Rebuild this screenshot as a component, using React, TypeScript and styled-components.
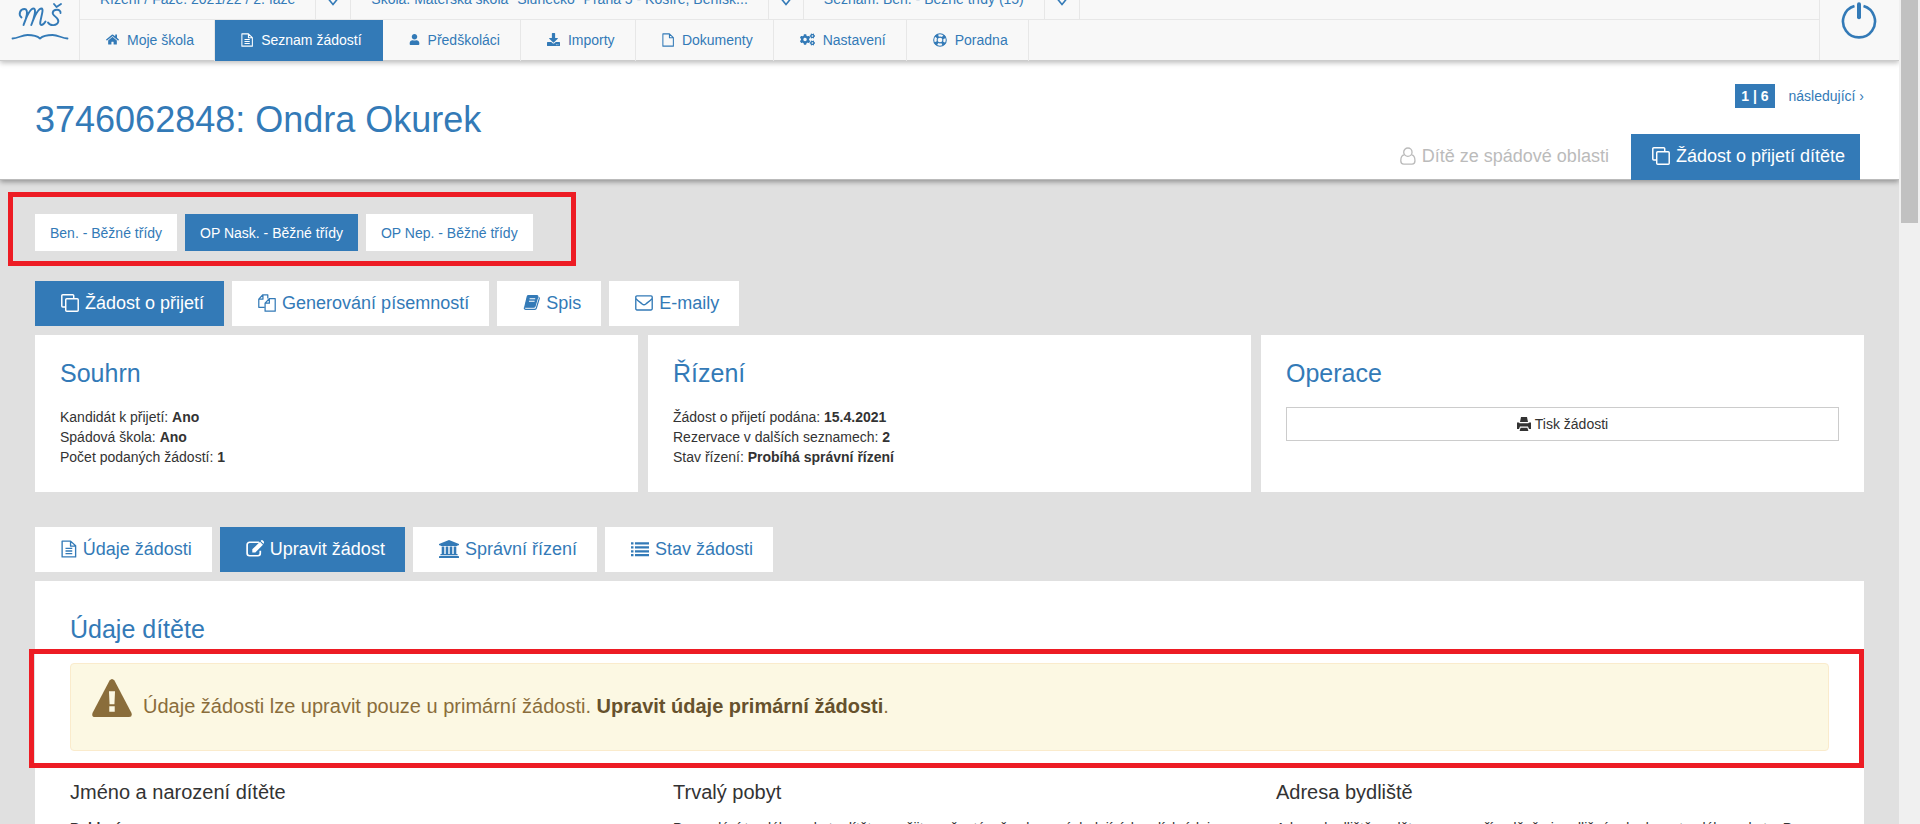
import React from "react";
import styled, { createGlobalStyle, css } from "styled-components";
import { FaHome, FaUser, FaDownload, FaCogs } from "react-icons/fa";

const blue = "#337ab7";

const GlobalStyle = createGlobalStyle`
  *, *::before, *::after { box-sizing: border-box; }
  html, body { margin: 0; height: 100%; overflow: hidden; }
  #root { height: 100%; }
  body {
    font-family: "Liberation Sans", Arial, sans-serif;
    font-size: 14px;
    line-height: 20px;
    color: #333;
    background: #e0e0e0;
  }
  a { color: ${blue}; text-decoration: none; }
  button { font: inherit; cursor: pointer; }
  h1, h2, h3, p, ul { margin: 0; padding: 0; font-weight: 400; }
  svg { display: block; flex: none; }
`;

const Window = styled.div`
  display: flex;
  height: 100vh;
  overflow: hidden;
`;

const Page = styled.div`
  flex: 1;
  min-width: 0;
  height: 100%;
  overflow: hidden;
`;

const ScrollTrack = styled.div`
  flex: none;
  width: 21px;
  padding: 0 2px;
  background: #f0f0f0;
`;

const ScrollThumb = styled.div`
  height: 223px;
  background: #c1c1c1;
`;

const TopBar = styled.header`
  position: relative;
  z-index: 2;
  display: flex;
  height: 61px;
  background: #f8f8f8;
  border-bottom: 1px solid #ccc;
  box-shadow: 0 2px 5px rgba(0, 0, 0, 0.25);
`;

const LogoLink = styled.a`
  display: flex;
  justify-content: center;
  width: 80px;
  border-right: 1px solid #e7e7e7;
`;

const Menus = styled.div`
  flex: 1;
  min-width: 0;
`;

const ContextRow = styled.div`
  display: flex;
  align-items: flex-end;
  height: 20px;
  border-bottom: 1px solid #e7e7e7;
`;

const ContextLink = styled.a`
  height: 40px;
  padding: 10px 20px;
  border-right: 1px solid #e7e7e7;
`;

const ContextToggle = styled.button`
  display: flex;
  align-items: flex-end;
  justify-content: center;
  width: 35px;
  height: 40px;
  padding: 0 0 13px;
  color: ${blue};
  background: none;
  border: 0;
  border-right: 1px solid #e7e7e7;
`;

const Nav = styled.nav`
  display: flex;
  height: 41px;
`;

const NavLink = styled.a<{ $active?: boolean }>`
  display: flex;
  align-items: center;
  gap: 8px;
  padding: 0 20px 2px 26px;
  border-right: 1px solid #e7e7e7;
  ${(p) => p.$active && css`
    color: #fff;
    background: ${blue};
    border-color: ${blue};
  `}
`;

const Logout = styled.button`
  width: 80px;
  display: flex;
  justify-content: center;
  padding: 2px 2px 0 0;
  color: ${blue};
  background: none;
  border: 0;
  border-left: 1px solid #e7e7e7;
`;

const TitleBar = styled.section`
  position: relative;
  z-index: 1;
  display: flex;
  justify-content: space-between;
  height: 119px;
  padding: 0 35px;
  background: #fff;
  border-bottom: 1px solid #bbb;
  box-shadow: 0 2px 5px rgba(0, 0, 0, 0.35);
`;

const Title = styled.h1`
  padding-top: 39px;
  font-size: 36px;
  line-height: 40px;
  color: ${blue};
`;

const TitleSide = styled.div`
  display: flex;
  flex-direction: column;
  align-items: flex-end;
  justify-content: space-between;
  padding-top: 23px;
`;

const Pager = styled.div`
  display: flex;
  align-items: center;
  gap: 14px;
`;

const PagerBadge = styled.span`
  padding: 2px 6px;
  font-weight: 700;
  color: #fff;
  background: ${blue};
`;

const TitleTabs = styled.div`
  display: flex;
  align-items: stretch;
  height: 46px;
  margin: 0 4px -1px 0;
  font-size: 18px;
`;

const TitleTab = styled.a<{ $active?: boolean }>`
  display: flex;
  align-items: center;
  gap: 6px;
  padding: 0 22px 2px;
  color: #bbb;
  ${(p) => p.$active && css`
    padding: 0 15px 2px 21px;
    color: #fff;
    background: ${blue};
  `}
`;

const Content = styled.main`
  padding: 12px 35px 0;
`;

const Marked = styled.div`
  border: 5px solid #ed1c24;
`;

const ListMark = styled(Marked)`
  width: fit-content;
  margin-left: -27px;
  padding: 17px 38px 10px 22px;
`;

const TabRow = styled.nav`
  display: flex;
  gap: 8px;
`;

const SmallTab = styled.a<{ $active?: boolean }>`
  padding: 9px 15px 8px;
  background: ${(p) => (p.$active ? blue : "#fff")};
  color: ${(p) => (p.$active ? "#fff" : blue)};
`;

const BigTabs = styled(TabRow)`
  padding-top: 15px;
`;

const LowerTabs = styled(TabRow)`
  padding-top: 35px;
`;

const Tab = styled.a<{ $active?: boolean }>`
  display: flex;
  align-items: center;
  gap: 6px;
  height: 45px;
  padding: 0 20px 2px 26px;
  font-size: 18px;
  background: #fff;
  ${(p) => p.$active && css`
    color: #fff;
    background: ${blue};
  `}
`;

const Cards = styled.div`
  display: grid;
  grid-template-columns: repeat(3, 1fr);
  gap: 10px;
  padding-top: 9px;
`;

const Card = styled.section`
  min-height: 157px;
  padding: 23px 25px;
  background: #fff;
`;

const Heading = styled.h2`
  font-size: 25px;
  line-height: 30px;
  color: ${blue};
`;

const Facts = styled.ul`
  padding-top: 19px;
  list-style: none;
`;

const PrintButton = styled.button`
  display: flex;
  align-items: center;
  justify-content: center;
  gap: 4px;
  width: 100%;
  height: 34px;
  margin-top: 19px;
  color: #333;
  background: #fff;
  border: 1px solid #ccc;
`;

const Panel = styled.section`
  margin-top: 9px;
  padding: 33px 35px 60px;
  background: #fff;
`;

const AlertMark = styled(Marked)`
  margin: 5px -35px 0 -41px;
  padding: 9px 30px 12px 36px;
`;

const Alert = styled.div`
  display: flex;
  align-items: flex-start;
  gap: 11px;
  height: 88px;
  padding: 15px 21px;
  font-size: 20px;
  color: #8a6d3b;
  background: #fcf8e3;
  border: 1px solid #faebcc;
  border-radius: 4px;
`;

const AlertText = styled.p`
  padding-top: 13px;
  line-height: 28px;
  a { font-weight: 700; color: #66512c; }
`;

const Columns = styled.div`
  display: grid;
  grid-template-columns: repeat(3, minmax(0, 1fr));
  gap: 20px;
  margin-right: -30px;
  padding-top: 12px;
`;

const SubHeading = styled.h3`
  font-size: 20px;
  line-height: 24px;
`;

const ColumnText = styled.p<{ $strong?: boolean }>`
  padding-top: 14px;
  white-space: nowrap;
  font-weight: ${(p) => (p.$strong ? 700 : 400)};
`;

/* Outline icons on a 16-unit grid, drawn as strokes. */
type IconProps = { size?: number };

const Outline = ({ size = 18, w = 16, sw = 1.3, children }: IconProps & { w?: number; sw?: number; children: React.ReactNode }) => (
  <svg width={(size * w) / 16} height={size} viewBox={`0 0 ${w} 16`} fill="none" stroke="currentColor" strokeWidth={sw} strokeLinejoin="round" aria-hidden="true">
    {children}
  </svg>
);

const FileIcon = ({ size, lines }: IconProps & { lines?: boolean }) => (
  <Outline size={size} w={14} sw={1.2}>
    <path d="M1 1h7.5L13 5.2V15H1zM8.5 1v4.5H13" />
    {lines && <path d="M4 7.5h6M4 9.8h6M4 12.1h6" />}
  </Outline>
);

const CopyIcon = () => (
  <Outline>
    <path d="M4 11.5H1.6a.9.9 0 0 1-.9-.9V1.6a.9.9 0 0 1 .9-.9h8.8a.9.9 0 0 1 .9.9V4" />
    <rect x="4.2" y="4.2" width="11.1" height="11.1" rx=".9" />
  </Outline>
);

const PagesIcon = () => (
  <Outline sw={1.1}>
    <path d="M6 11.8H.7V4.5L4.3.7h4.4v3.4M.7 4.6h3.7V.7" />
    <path d="M6.3 8.1 10 4.2h5.3v11.1h-9zM6.3 8.2h3.8v-4" />
  </Outline>
);

const BookIcon = () => (
  <Outline size={17} sw={1.1}>
    <path fill="currentColor" d="M5 1.6h8.2q1 0 .7 1L11.3 11.5q-.3 1-1.3 1H1.6L4 2.6q.3-1 1-1z" />
    <path d="M1.6 12.500c-.8 1 0 1.900 1 1.900h8.600q1 0 1.300-1L15.300 4.300q.2-.9-.6-1.300" />
    <path stroke="#fff" strokeWidth="1" d="M6.2 4.5h5.3M5.6 6.8h5.3" />
  </Outline>
);

const MailIcon = () => (
  <Outline sw={1.2}>
    <rect x=".7" y="1.6" width="14.6" height="12.6" rx="1" />
    <path d="M.9 4.2c2 2.1 4.2 3.5 5.5 4.7q1.6 1.3 3.2 0c1.3-1.2 3.5-2.6 5.5-4.7" />
  </Outline>
);

const PersonOutlineIcon = () => (
  <Outline w={14} sw={1.2}>
    <circle cx="7" cy="4.6" r="3.7" />
    <path d="M3.7 7C1.5 7.3.7 9.5.7 12.3c0 1.7 1 2.9 2.6 2.9h7.4c1.6 0 2.6-1.2 2.6-2.9 0-2.8-.8-5-3-5.3" />
  </Outline>
);

const RingIcon = () => (
  <Outline size={14} sw={1.2}>
    <circle cx="8" cy="8" r="7.2" />
    <circle cx="8" cy="8" r="3.3" />
    <circle cx="8" cy="8" r="5.3" strokeWidth="4" strokeDasharray="3.33 5" strokeDashoffset="-2.5" />
  </Outline>
);

const EditIcon = () => (
  <Outline sw={1.5}>
    <path d="M11.5 2H3.2A2.2 2.2 0 0 0 1 4.2v7.6A2.2 2.2 0 0 0 3.2 14h7.3a2.2 2.2 0 0 0 2.2-2.2V9.5" />
    <path fill="currentColor" stroke="none" d="m5.6 8.3 6.8-6.8 2.7 2.7L8.3 11H5.6zM13 .9l.6-.6q.6-.5 1.2 0l1.2 1.3q.5.6 0 1.1l-.5.7z" />
  </Outline>
);

const BankIcon = () => (
  <svg width="20" height="18" viewBox="0 0 20 18" fill="currentColor" aria-hidden="true">
    <path d="M10 0 20 4v1.3h-1.3q0 .7-.8.7H2.1q-.8 0-.8-.7H0V4z" />
    <path d="M2.7 6.6h2.6v7.3h1.4V6.6h2.6v7.3h1.4V6.6h2.6v7.3h1.4V6.6h2.6v7.3h.6q.8 0 .8.7v.7H1.3v-.7q0-.7.8-.7h.6zM.8 15.9h18.4q.8 0 .8.7V18H0v-1.4q0-.7.8-.7z" />
  </svg>
);

const ListIcon = () => (
  <Outline sw={2}>
    <path d="M0 3h2.2M3.5 3H16M0 6.5h2.2M3.5 6.5H16M0 10h2.2M3.5 10H16M0 13.5h2.2M3.5 13.5H16" />
  </Outline>
);

const PrintIcon = () => (
  <svg width="14" height="14" viewBox="0 0 14 14" fill="currentColor" aria-hidden="true">
    <path d="M4 0h6l1 5H3zM0 5.5h2l.6.7h8.8l.6-.7h2V12h-2l-1-2.5H3L2 12H0zM3.6 10.7h6.8L11.4 14H2.6z" />
  </svg>
);

const WarningIcon = () => (
  <svg width="40" height="39" viewBox="0 0 41 40" aria-hidden="true">
    <path fill="currentColor" d="M18 1.6q2.5-3.2 5 0l17.5 33.3q1.2 3.9-2.5 4.1H3q-3.7-.2-2.5-4.1z" />
    <path fill="#fcf8e3" d="M17.4 12.5h6.2l-.6 13.3h-5zM17.7 28h5.6v5.6h-5.6z" />
  </svg>
);

const ChevronIcon = () => (
  <svg width="12" height="8" viewBox="0 0 12 8" fill="none" stroke="currentColor" strokeWidth="1.6" aria-hidden="true">
    <path d="m1.5 1 4.5 5.5L10.5 1" />
  </svg>
);

const PowerIcon = () => (
  <svg width="36" height="38" viewBox="0 0 36 38" fill="none" stroke="currentColor" aria-hidden="true">
    <path strokeWidth="2.6" d="M13.5 4A16 16 0 1 0 22.500 4" />
    <path strokeWidth="4" strokeLinecap="round" d="M18 2.2v13" />
  </svg>
);

const Logo = () => (
  <svg width="58" height="42" viewBox="0 0 58 42" fill="none" stroke={blue} strokeLinecap="round" strokeLinejoin="round" role="img" aria-label="MŠ">
    <g strokeWidth="1.9">
      <path d="M10.5 17.5C7 14.5 9 9 13.5 9c4.5 0 2 9.5-1 16C15 18 19 8.500 22.500 8.500c3.200 0 .8 9-2.200 16.500C23 17.500 27 8.500 30.500 8.500c3.700 0-4 16.500-.2 16.500 1.700 0 3-1.500 4.200-3.500" />
      <path d="M49.5 13c.8-4-7-4.500-7.800-.3-.6 3.300 6.500 4.800 5.600 8.800-1 4.500-8.300 4.700-10.300 1" />
      <path d="m43 4 2.500 3L50 4" />
    </g>
    <path strokeWidth="1.8" d="M1.5 38.5c6-.3 9-3.500 15-3.500 6 0 10 1.200 12.500 3.500 2.500-2.300 6.500-3.500 12.500-3.500 6 0 9 3.200 15 3.500" />
  </svg>
);

const navItems = [
  { label: "Moje škola", icon: <FaHome size={13} /> },
  { label: "Seznam žádostí", icon: <FileIcon size={14} lines />, active: true },
  { label: "Předškoláci", icon: <FaUser size={11} /> },
  { label: "Importy", icon: <FaDownload size={13} /> },
  { label: "Dokumenty", icon: <FileIcon size={14} /> },
  { label: "Nastavení", icon: <FaCogs size={15} /> },
  { label: "Poradna", icon: <RingIcon /> },
];

const contexts = [
  "Řízení / Fáze: 2021/22 / 2. fáze",
  'Škola: Mateřská škola "Slunéčko" Praha 5 - Košíře, Beníšk...',
  "Seznam: Ben. - Běžné třídy (15)",
];

const lists = ["Ben. - Běžné třídy", "OP Nask. - Běžné třídy", "OP Nep. - Běžné třídy"];

const mainTabs = [
  { label: "Žádost o přijetí", icon: <CopyIcon /> },
  { label: "Generování písemností", icon: <PagesIcon /> },
  { label: "Spis", icon: <BookIcon /> },
  { label: "E-maily", icon: <MailIcon /> },
];

const formTabs = [
  { label: "Údaje žádosti", icon: <FileIcon lines /> },
  { label: "Upravit žádost", icon: <EditIcon />, active: true },
  { label: "Správní řízení", icon: <BankIcon /> },
  { label: "Stav žádosti", icon: <ListIcon /> },
];

export default function App() {
  return (
    <Window>
      <GlobalStyle />
      <Page>
        <TopBar>
          <LogoLink href="#"><Logo /></LogoLink>
          <Menus>
            <ContextRow>
              {contexts.map((label) => (
                <React.Fragment key={label}>
                  <ContextLink href="#">{label}</ContextLink>
                  <ContextToggle aria-label="Vybrat"><ChevronIcon /></ContextToggle>
                </React.Fragment>
              ))}
            </ContextRow>
            <Nav>
              {navItems.map((item) => (
                <NavLink key={item.label} href="#" $active={item.active}>
                  {item.icon}
                  {item.label}
                </NavLink>
              ))}
            </Nav>
          </Menus>
          <Logout aria-label="Odhlásit"><PowerIcon /></Logout>
        </TopBar>

        <TitleBar>
          <Title>3746062848: Ondra Okurek</Title>
          <TitleSide>
            <Pager>
              <PagerBadge>1 | 6</PagerBadge>
              <a href="#">následující ›</a>
            </Pager>
            <TitleTabs>
              <TitleTab href="#"><PersonOutlineIcon />Dítě ze spádové oblasti</TitleTab>
              <TitleTab href="#" $active><CopyIcon />Žádost o přijetí dítěte</TitleTab>
            </TitleTabs>
          </TitleSide>
        </TitleBar>

        <Content>
          <ListMark>
            <TabRow>
              {lists.map((label, i) => (
                <SmallTab key={label} href="#" $active={i === 1}>{label}</SmallTab>
              ))}
            </TabRow>
          </ListMark>

          <BigTabs>
            {mainTabs.map((tab, i) => (
              <Tab key={tab.label} href="#" $active={i === 0}>{tab.icon}{tab.label}</Tab>
            ))}
          </BigTabs>

          <Cards>
            <Card>
              <Heading>Souhrn</Heading>
              <Facts>
                <li>Kandidát k přijetí: <b>Ano</b></li>
                <li>Spádová škola: <b>Ano</b></li>
                <li>Počet podaných žádostí: <b>1</b></li>
              </Facts>
            </Card>
            <Card>
              <Heading>Řízení</Heading>
              <Facts>
                <li>Žádost o přijetí podána: <b>15.4.2021</b></li>
                <li>Rezervace v dalších seznamech: <b>2</b></li>
                <li>Stav řízení: <b>Probíhá správní řízení</b></li>
              </Facts>
            </Card>
            <Card>
              <Heading>Operace</Heading>
              <PrintButton><PrintIcon />Tisk žádosti</PrintButton>
            </Card>
          </Cards>

          <LowerTabs>
            {formTabs.map((tab) => (
              <Tab key={tab.label} href="#" $active={tab.active}>{tab.icon}{tab.label}</Tab>
            ))}
          </LowerTabs>

          <Panel>
            <Heading>Údaje dítěte</Heading>
            <AlertMark>
              <Alert role="alert">
                <WarningIcon />
                <AlertText>
                  Údaje žádosti lze upravit pouze u primární žádosti. <a href="#">Upravit údaje primární žádosti</a>.
                </AlertText>
              </Alert>
            </AlertMark>
            <Columns>
              <div>
                <SubHeading>Jméno a narození dítěte</SubHeading>
                <ColumnText $strong>Pohlaví</ColumnText>
              </div>
              <div>
                <SubHeading>Trvalý pobyt</SubHeading>
                <ColumnText>Pro zadání trvalého pobytu dítěte použijte našeptávač nebo v následujících polích údaje</ColumnText>
              </div>
              <div>
                <SubHeading>Adresa bydliště</SubHeading>
                <ColumnText>Adresu bydliště vyplňte pouze v případě, že je odlišná od adresy trvalého pobytu. Pro</ColumnText>
              </div>
            </Columns>
          </Panel>
        </Content>
      </Page>
      <ScrollTrack><ScrollThumb /></ScrollTrack>
    </Window>
  );
}
